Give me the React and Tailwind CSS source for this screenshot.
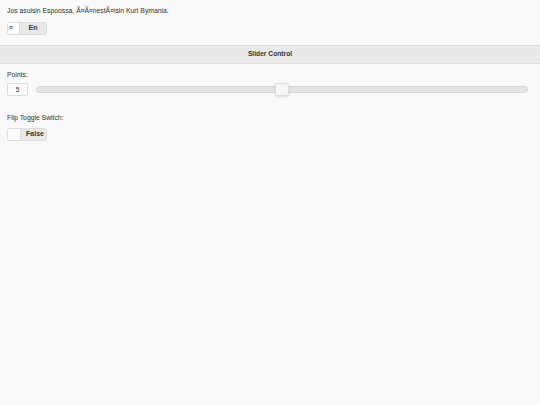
import React, { useState } from 'react';

function Flip({ offLabel }) {
  return (
    <div className="flex w-[40px] h-[13px] rounded-[3px] border border-[#dddddd] bg-[#e8e8e8] overflow-hidden text-[7px] font-bold text-[#333]">
      <div className="w-[13px] h-full bg-white border-r border-[#dddddd]" />
      <div className="flex-1 flex items-center justify-end pr-[2px]">{offLabel}</div>
    </div>
  );
}

export default function App() {
  const [points] = useState(5);
  const pct = (points / 10) * 100;

  return (
    <div className="min-h-[405px] bg-[#f9f9f9] text-[#333333] font-['Liberation_Sans',Arial,sans-serif]">
      <div className="px-[7px] pt-[6px] pb-[10px]">
        <p className="text-[6.8px] leading-[9px] mb-[7px]">Jos asuisin Espoossa, Ã¤Ã¤nestÃ¤isin Kurt Bymania.</p>
        <div className="flex w-[40px] h-[13px] rounded-[3px] border border-[#dddddd] bg-[#e8e8e8] overflow-hidden text-[7px] text-[#333]">
          <div className="w-[12px] h-full bg-white border-r border-[#dddddd] flex items-center pl-[1px]">¤</div>
          <div className="flex-1 flex items-center justify-center font-bold">En</div>
        </div>
      </div>

      <div className="h-[19px] bg-[#e9e9e9] border-y border-[#dddddd] flex items-center justify-center text-[6.7px] font-bold">
        Slider Control
      </div>

      <div className="px-[7px] pt-[6px]">
        <div className="text-[6.8px] leading-[9px] mb-[4px]">Points:</div>
        <div className="flex items-center h-[13px]">
          <div className="w-[21px] h-[13px] bg-white border border-[#dddddd] rounded-[2px] flex items-center justify-center text-[6.5px]">
            {points}
          </div>
          <div className="relative ml-[8px] w-[492px] h-[7px] rounded-full bg-[#e5e5e5] border border-[#d6d6d6]">
            <div
              className="absolute top-[-4px] w-[14px] h-[13px] bg-[#f6f6f6] border border-[#dddddd] rounded-[2px] shadow-sm"
              style={{ left: `calc(${pct}% - 7px)` }}
            />
          </div>
        </div>

        <div className="text-[6.8px] leading-[9px] mt-[17px] mb-[6px]">Flip Toggle Switch:</div>
        <Flip offLabel="False" />
      </div>
    </div>
  );
}
